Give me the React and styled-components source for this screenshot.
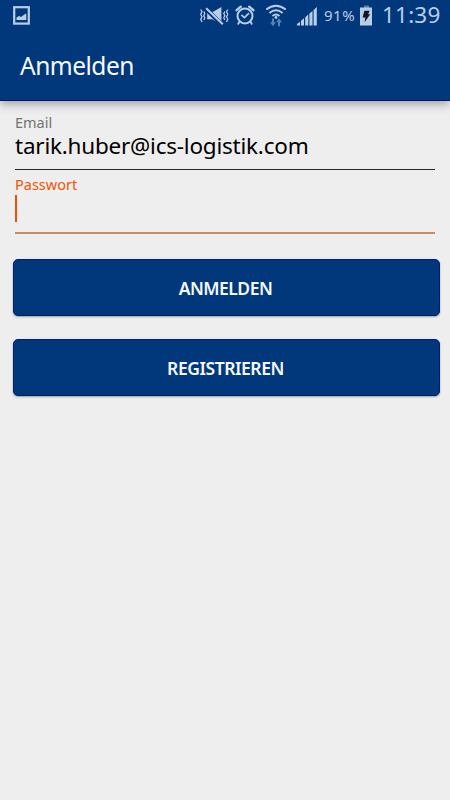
import React, { useState } from 'react';
import styled, { createGlobalStyle } from 'styled-components';

const ICON = '#b9cde6';

const App = () => {
  const [email, setEmail] = useState('tarik.huber@ics-logistik.com');

  const onHandleEmail = (e) => {
    setEmail(e.target.value);
  };

  return (
    <>
      <GlobalStyle />
      <Screen>
        <Header>
          <StatusBar>
            <PictureIcon />
            <StatusIcons>
              <MuteIcon />
              <AlarmIcon />
              <WifiIcon />
              <SignalIcon />
              <Percent>91%</Percent>
              <BatteryIcon />
              <Clock>11:39</Clock>
            </StatusIcons>
          </StatusBar>
          <Title>Anmelden</Title>
        </Header>
        <Form onSubmit={(e) => e.preventDefault()}>
          <Field>
            <Label htmlFor='email'>Email</Label>
            <Input
              id='email'
              type='text'
              value={email}
              spellCheck={false}
              onChange={onHandleEmail}
            />
          </Field>
          <Field $active>
            <Label $active>Passwort</Label>
            <Caret />
          </Field>
          <Buttons>
            <Btn type='submit' $spacing='-0.5px'>
              ANMELDEN
            </Btn>
            <Btn type='button' $spacing='-0.45px'>
              REGISTRIEREN
            </Btn>
          </Buttons>
        </Form>
      </Screen>
    </>
  );
};

const PictureIcon = () => (
  <svg width='17' height='19' viewBox='0 0 17 19'>
    <rect x='1.2' y='1.2' width='14.6' height='16.4' fill='none' stroke={ICON} strokeWidth='2.2' />
    <path d='M3.5 14V11.5L6 10L8 11L11 8.8L13.3 7.5V14Z' fill={ICON} />
  </svg>
);

const MuteIcon = () => (
  <svg width='30' height='20' viewBox='0 0 30 20'>
    <g fill='none' stroke={ICON} strokeWidth='1.3'>
      <path d='M1.7 3.5L3 5.7L1.7 8.2L3 10.7L1.7 13.2L3 16' />
      <path d='M4.8 5.5L5.8 7.6L4.8 9.7L5.8 11.8L4.8 14' />
      <path d='M28.8 3.5L27.5 5.7L28.8 8.2L27.5 10.7L28.8 13.2L27.5 16' />
      <path d='M25.8 5.5L24.8 7.6L25.8 9.7L24.8 11.8L25.8 14' />
    </g>
    <path d='M8.2 6.3H13.2L22.4 1V18.5L13.2 13.2H8.2Z' fill={ICON} />
    <path d='M6.8 2.8L23.2 18.8' stroke='#00387b' strokeWidth='4.4' />
    <path d='M7.2 2.2L23.8 18.3' stroke={ICON} strokeWidth='2' />
  </svg>
);

const AlarmIcon = () => (
  <svg width='20' height='21' viewBox='0 0 20 21'>
    <g fill='none' stroke={ICON}>
      <circle cx='10' cy='11' r='7.5' strokeWidth='2' />
      <path d='M1.6 5.2L5.8 1.7M18.4 5.2L14.2 1.7' strokeWidth='2.4' strokeLinecap='round' />
      <path d='M6.4 9.8L9.4 12.6L14 8.2' strokeWidth='1.7' />
      <path d='M4.7 16.5L2.8 19.5M15.3 16.5L17.2 19.5' strokeWidth='1.8' />
    </g>
  </svg>
);

const WifiIcon = () => (
  <svg width='22' height='23' viewBox='0 0 22 23'>
    <g fill='none' stroke={ICON} strokeWidth='1.9'>
      <path d='M1.3 5.6Q11 -2.3 20.7 5.6' />
      <path d='M4.4 8.9Q11 3.4 17.6 8.9' />
      <path d='M7.5 12Q11 9 14.5 12' />
    </g>
    <circle cx='11' cy='13.5' r='1.4' fill={ICON} />
    <g fill='#5683b8'>
      <path d='M7 14.5H9V18.2H10.8L8 22.3L5 18.2H7Z' />
      <path d='M13 22.3V18.3H11.2L14 14.3L17 18.3H15V22.3Z' />
    </g>
  </svg>
);

const SignalIcon = () => (
  <svg width='21' height='20' viewBox='0 0 21 20'>
    <path
      d='M0 19.5V18L3 15.7V19.5ZM4 19.5V14.8L7 12.3V19.5ZM8.2 19.5V11.2L11.3 8.6V19.5ZM12.4 19.5V7.6L15.5 5V19.5ZM16.6 19.5V4L19.8 1V19.5Z'
      fill={ICON}
    />
  </svg>
);

const BatteryIcon = () => (
  <svg width='13' height='21' viewBox='0 0 13 21'>
    <rect x='4' y='0.5' width='5' height='2.5' fill='#5683b8' />
    <rect x='0' y='2.5' width='12' height='18' fill={ICON} />
    <path d='M4.4 5.8H9.6L8.1 9.3H10.2L4.6 17.3L5.3 12.4H2.6Z' fill='#101820' />
  </svg>
);

const GlobalStyle = createGlobalStyle`
  * {
    box-sizing: border-box;
  }

  body {
    margin: 0;
    background-color: #eeeeee;
    font-family: 'Noto Sans', sans-serif;
  }
`;

const Screen = styled.div`
  display: flex;
  flex-direction: column;
  height: 800px;
  overflow: hidden;
  background-color: #eeeeee;
`;

const Header = styled.header`
  height: 101px;
  flex-shrink: 0;
  background-color: #00387b;
  border-bottom: 1px solid #001672;
  box-shadow: 0 3px 9px rgba(50, 35, 55, 0.4);
`;

const StatusBar = styled.div`
  display: flex;
  align-items: center;
  justify-content: space-between;
  height: 31px;
  padding: 0 9px 0 13px;
`;

const StatusIcons = styled.div`
  display: flex;
  align-items: center;

  svg {
    flex-shrink: 0;
    margin-right: 6px;
  }

  svg:nth-child(2),
  svg:nth-child(3) {
    margin-right: 10px;
  }
`;

const Percent = styled.span`
  width: 36px;
  padding-bottom: 2px;
  color: ${ICON};
  font-size: 15px;
  line-height: 18px;
  letter-spacing: 0.5px;
`;

const Clock = styled.span`
  width: 62px;
  padding: 0 0 2px 3px;
  color: ${ICON};
  font-size: 22.5px;
  line-height: 30px;
  letter-spacing: 0.2px;
  white-space: nowrap;
`;

const Title = styled.h1`
  margin: 0;
  padding: 18px 20px 0;
  color: #f7f9ff;
  font-size: 24.5px;
  font-weight: 400;
  line-height: 34px;
  letter-spacing: -0.5px;
`;

const Form = styled.form`
  display: flex;
  flex-direction: column;
  padding: 11px 10px 0 13px;
`;

const Field = styled.div`
  display: flex;
  flex-direction: column;
  height: ${(props) => (props.$active ? '64px' : '58px')};
  margin: 0 5px 0 2px;
  padding-top: ${(props) => (props.$active ? '4px' : '0')};
  border-bottom: ${(props) => (props.$active ? '2px solid #cb8b60' : '1px solid #252525')};
`;

const Label = styled.label`
  color: ${(props) => (props.$active ? '#f25400' : '#747474')};
  font-size: 14.5px;
  line-height: 21px;
`;

const Input = styled.input`
  width: 100%;
  height: 28px;
  margin-top: -2px;
  padding: 0;
  border: none;
  outline: none;
  background: transparent;
  color: #000000;
  font-family: inherit;
  font-size: 22.5px;
  letter-spacing: -0.22px;
`;

const Caret = styled.span`
  width: 2px;
  height: 27px;
  background-color: #f64c00;
`;

const Buttons = styled.div`
  display: flex;
  flex-direction: column;
  gap: 23px;
  padding-top: 25px;
`;

const Btn = styled.button`
  height: 57px;
  padding: 0 2px 0 0;
  border: 1px solid #001f70;
  border-radius: 5px;
  background-color: #00387b;
  box-shadow: 0 1px 2px rgba(0, 0, 0, 0.35);
  color: #f7f9ff;
  font-family: inherit;
  font-size: 17.5px;
  font-weight: 600;
  letter-spacing: ${(props) => props.$spacing};
`;

export default App;
